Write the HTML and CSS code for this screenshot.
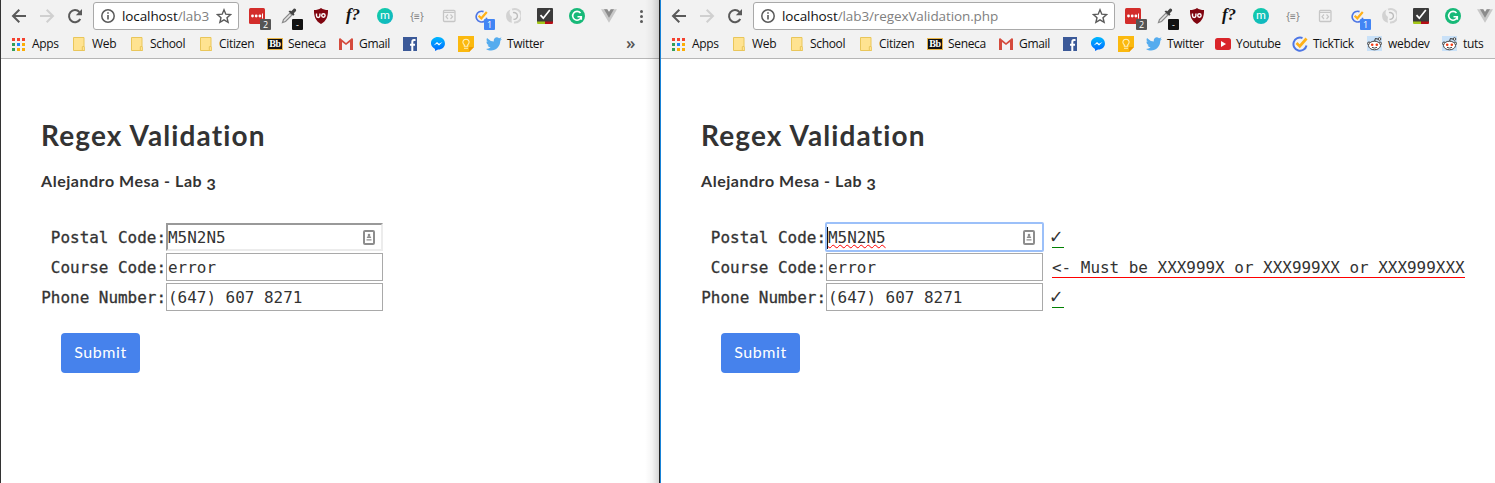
FILE: index.html
```html
<!DOCTYPE html>
<html lang="en">
<head>
<meta charset="utf-8">
<title>Regex Validation</title>
<link rel="stylesheet" href="styles.css">
</head>
<body>
<svg class="defs" aria-hidden="true">
  <linearGradient id="gp" x1="0" y1="0" x2="0" y2="1"><stop offset="0" stop-color="#00b8ff"/><stop offset="1" stop-color="#0068ff"/></linearGradient>
  <symbol id="back" viewBox="0 0 16 16"><path d="M15 8H2.5M8.3 1.7 2 8l6.3 6.3" fill="none" stroke="currentColor" stroke-width="2"/></symbol>
  <symbol id="fwd" viewBox="0 0 16 16"><path d="M1 8h12.5M7.7 1.7 14 8l-6.3 6.3" fill="none" stroke="currentColor" stroke-width="2"/></symbol>
  <symbol id="reload" viewBox="0 0 16 16"><path d="M13.3 11A6 6 0 1 1 12.4 4" fill="none" stroke="currentColor" stroke-width="2"/><path d="M15 1v6.3H8.8z" fill="currentColor"/></symbol>
  <symbol id="info" viewBox="0 0 16 16"><circle cx="8" cy="8" r="6.2" fill="none" stroke="#5a5a5a" stroke-width="1.5"/><path d="M7.2 7h1.6v4.6H7.2zM7.2 4.3h1.6v1.5H7.2z" fill="#5a5a5a"/></symbol>
  <symbol id="star" viewBox="0 0 16 16"><path d="m8 1.8 1.8 4.4 4.8.4-3.6 3.1 1.1 4.6L8 11.8l-4.1 2.5L5 9.700 1.400 6.600l4.800-.4z" fill="none" stroke="#5a5a5a" stroke-width="1.4"/></symbol>
  <symbol id="lastpass" viewBox="0 0 16 16"><rect width="16" height="16" rx="1.500" fill="#d32d2b"/><g fill="#fff"><circle cx="3.500" cy="8" r="1.400"/><circle cx="7.200" cy="8" r="1.400"/><circle cx="10.900" cy="8" r="1.400"/><rect x="13" y="5.500" width="1" height="5"/></g></symbol>
  <symbol id="picker" viewBox="0 0 16 16"><path d="m1.500 14.500 1-3L9 5l2 2-6.500 6.500z" fill="#e4e4e4" stroke="#8a8a8a" stroke-width="1.200"/><path d="m7.500 3.500 1.500-1 1.300.8L12.500 1c1.300-1.300 3.500.7 2.300 2.200l-2 2 .7 1.400-1.200 1.200z" fill="#444"/></symbol>
  <symbol id="ublock" viewBox="0 0 16 16"><path d="M8 0c2 1.400 4.300 2 7 2 .2 6-1.500 11-7 14C2.500 13 .8 8 1 2c2.700 0 5-.6 7-2z" fill="#800610"/><path d="M3.500 5.500v2.300a1.700 1.700 0 0 0 3.400 0V5.500" fill="none" stroke="#fff" stroke-width="1.400"/><circle cx="10.400" cy="7.500" r="1.700" fill="none" stroke="#fff" stroke-width="1.400"/></symbol>
  <symbol id="code" viewBox="0 0 16 16"><rect x="2.500" y="2.500" width="11.500" height="11" rx="1" fill="none" stroke="#c6c6c6" stroke-width="1.300"/><path d="M2.500 4.500h11M7 6.500 5 8.700 7 11m2.500-4.500 2 2.200-2 2.300" fill="none" stroke="#c6c6c6" stroke-width="1.200"/></symbol>
  <symbol id="tick" viewBox="0 0 16 16"><path d="M10.500 2A6.600 6.600 0 1 0 14.500 9.500" fill="none" stroke="#4d76e5" stroke-width="2"/><path d="m4.500 7 3.300 3.200L14.500 2.500" fill="none" stroke="#ffb119" stroke-width="2.700"/></symbol>
  <symbol id="swirl" viewBox="0 0 16 16"><path d="M7 14.700A6.800 6.800 0 0 1 5.500 1.600Q3 6.500 7 9q-.8 3 0 5.700z" fill="#d2d2d2"/><path d="M7 1.700A6.700 6.700 0 1 1 9 14.500" fill="none" stroke="#d4d4d4" stroke-width="2"/><path d="M8 4.700a3.400 3.400 0 1 1 .5 6.600" fill="none" stroke="#bdbdbd" stroke-width="1.400"/></symbol>
  <symbol id="check" viewBox="0 0 16 16"><path d="M0 1q0-1 1-1h14q1 0 1 1v13H0z" fill="#3b3b3b"/><path d="M0 13.500h8V16H1q-1 0-1-1z" fill="#a4c718"/><path d="M8 13.500h8V15q0 1-1 1H8z" fill="#b60f16"/><path d="m3.500 7.200 2.800 3L12.800 2" fill="none" stroke="#fff" stroke-width="1.700"/></symbol>
  <symbol id="gram" viewBox="0 0 16 16"><circle cx="8" cy="8" r="8" fill="#17b978"/><path d="M11.500 5A4.400 4.400 0 1 0 12.300 9M8.500 8.700h3.800v3.100" fill="none" stroke="#fff" stroke-width="1.600"/></symbol>
  <symbol id="vue" viewBox="0 0 16 16"><path d="M0 1.200h6L8 4l2-2.800h6L8 14.800z" fill="#c8c8c8"/><path d="M3 1.200h3.300L8 4l1.700-2.800H13L8 9.700z" fill="#8b8b8b"/></symbol>
  <symbol id="apps" viewBox="0 0 13 13"><path d="M0 0h3v3H0zM5 0h3v3H5zM10 0h3v3h-3z" fill="#f4412f"/><path d="M0 5h3v3H0zM0 10h3v3H0z" fill="#31a05b"/><path d="M5 5h3v3H5z" fill="#1a87ff"/><path d="M10 5h3v3h-3zM5 10h3v3H5zM10 10h3v3h-3z" fill="#fcae06"/></symbol>
  <symbol id="folder" viewBox="0 0 12 14"><path d="M.500.500h10.500v9.500l.7.500v3H.500z" fill="#ffe391" stroke="#e9c65a"/><path d="M9.300 13.500V9.600h1.900" fill="none" stroke="#e9c65a"/></symbol>
  <symbol id="gmail" viewBox="0 0 14 12"><path d="M1 1h12v10H1z" fill="#f3f3f3"/><path d="M3 4v8H0V1l1-1 6 5 6-5 1 1v11h-3V4L7 7z" fill="#d54b3d"/></symbol>
  <symbol id="fb" viewBox="0 0 14 14"><path d="M0 0h14v14H0z" fill="#3b5998"/><path d="M12.500 3H11q-1.700 0-1.700 2v9M7 7.700h5" fill="none" stroke="#fff" stroke-width="2"/></symbol>
  <symbol id="msgr" viewBox="0 0 14 14"><path d="M7 0c9 0 9.500 12.500 0 12.500L4 14v-2C-2.800 8.500-.5 0 7 0z" fill="url(#gp)"/><path d="M2.500 8.500 6 5l2 1.800L11.500 5 8 8.500l-2-1.700z" fill="#fff"/></symbol>
  <symbol id="keep" viewBox="0 0 16 16"><path d="M0 0h16v11l-5 5H0z" fill="#fbb90f"/><path d="M11 16v-5h5z" fill="#f09b00"/><path d="M6.300 10.300V9C3.500 6.500 5 3.300 8 3.300S12.500 6.500 9.700 9v1.300zM6 12.300h4" fill="none" stroke="#fff0c0" stroke-width="1.100"/></symbol>
  <symbol id="bird" viewBox="0 0 16 14"><path d="M1 1q3 3.300 6.800 3.500C7.200 1.500 10.400-1 13 1.200L15.500.5l-1.300 1.900 1.800-.4-1.700 1.800C14.300 11.500 6.500 16 0 12q2.800 0 4.600-1.400-2.400-.3-3-2.300h1.300Q.300 7 .300 4.500l1.500.5Q-.2 3.500 1 1z" fill="#55acee"/></symbol>
  <symbol id="yt" viewBox="0 0 16 12"><rect width="16" height="12" rx="2.500" fill="#d9252a"/><path d="m6 3 5 3-5 3z" fill="#fff"/></symbol>
  <symbol id="reddit" viewBox="0 0 16 16"><path d="M0 0h15v15H0z" fill="#c9e1f8"/><path d="m7.500 6 .8-3.500 3.500.8" fill="none" stroke="#333"/><g fill="#fff" stroke="#444"><circle cx="12.500" cy="3" r="1.300"/><circle cx="2" cy="7.500" r="1.500"/><circle cx="13" cy="7.500" r="1.500"/><ellipse cx="7.500" cy="9.500" rx="6" ry="4.300"/></g><circle cx="5.200" cy="8.700" r="1.300" fill="#f43a14"/><circle cx="9.800" cy="8.700" r="1.300" fill="#f43a14"/><path d="M5 11.300q2.500 1.600 5 0" fill="none" stroke="#444"/></symbol>
  <symbol id="fill" viewBox="0 0 12 15"><rect x="1" y="1" width="10" height="13" rx="1" fill="#fff" stroke="#8d8d8d" stroke-width="2"/><circle cx="6" cy="5" r="1.300" fill="#8d8d8d"/><path d="M3.700 8q0-2 2.300-2t2.300 2zM3.500 9.300h5v1.200h-5z" fill="#8d8d8d"/></symbol>
</svg>
<main class="desktop">
  <section class="window window-left">
    <header class="chrome">
      <div class="toolbar">
        <svg class="nav"><use href="#back"/></svg><svg class="nav off"><use href="#fwd"/></svg><svg class="nav"><use href="#reload"/></svg>
        <div class="omnibox"><svg><use href="#info"/></svg><div class="url"><b>localhost</b>/lab3</div><svg><use href="#star"/></svg></div>
        <div class="extensions">
          <span><svg><use href="#lastpass"/></svg><i class="badge">2</i></span>
          <span><svg><use href="#picker"/></svg><i class="badge black">-</i></span>
          <span><svg><use href="#ublock"/></svg></span>
          <span class="whatfont">f?</span>
          <span><em class="momentum">m</em></span>
          <span class="json">{≡}</span>
          <span><svg><use href="#code"/></svg></span>
          <span><svg class="small"><use href="#tick"/></svg><i class="badge blue">1</i></span>
          <span><svg><use href="#swirl"/></svg></span>
          <span><svg><use href="#check"/></svg></span>
          <span><svg><use href="#gram"/></svg></span>
          <span><svg><use href="#vue"/></svg></span>
          <span class="menu"><u></u><u></u><u></u></span>
        </div>
      </div>
      <nav class="bookmarks">
        <a><svg class="s13"><use href="#apps"/></svg>Apps</a>
        <a><svg class="sf"><use href="#folder"/></svg>Web</a>
        <a><svg class="sf"><use href="#folder"/></svg>School</a>
        <a><svg class="sf"><use href="#folder"/></svg>Citizen</a>
        <a><em class="bb">Bb</em>Seneca</a>
        <a><svg class="sg"><use href="#gmail"/></svg>Gmail</a>
        <a><svg class="s14"><use href="#fb"/></svg></a>
        <a><svg class="s14"><use href="#msgr"/></svg></a>
        <a><svg><use href="#keep"/></svg></a>
        <a><svg class="st"><use href="#bird"/></svg>Twitter</a>
        <a class="more">»</a>
      </nav>
    </header>
    <div class="page">
      <h1>Regex Validation</h1>
      <h2>Alejandro Mesa - Lab <span class="oldstyle">3</span></h2>
      <form class="form">
        <label>Postal Code:</label><div class="field inset"><span>M5N2N5</span><svg class="fill"><use href="#fill"/></svg></div><p></p>
        <label>Course Code:</label><div class="field">error</div><p></p>
        <label>Phone Number:</label><div class="field">(647) 607 8271</div><p></p>
      </form>
      <button class="submit" type="button">Submit</button>
    </div>
  </section>
  <section class="window window-right">
    <header class="chrome">
      <div class="toolbar">
        <svg class="nav"><use href="#back"/></svg><svg class="nav off"><use href="#fwd"/></svg><svg class="nav"><use href="#reload"/></svg>
        <div class="omnibox"><svg><use href="#info"/></svg><div class="url"><b>localhost</b>/lab3/regexValidation.php</div><svg><use href="#star"/></svg></div>
        <div class="extensions">
          <span><svg><use href="#lastpass"/></svg><i class="badge">2</i></span>
          <span><svg><use href="#picker"/></svg><i class="badge black">-</i></span>
          <span><svg><use href="#ublock"/></svg></span>
          <span class="whatfont">f?</span>
          <span><em class="momentum">m</em></span>
          <span class="json">{≡}</span>
          <span><svg><use href="#code"/></svg></span>
          <span><svg class="small"><use href="#tick"/></svg><i class="badge blue">1</i></span>
          <span><svg><use href="#swirl"/></svg></span>
          <span><svg><use href="#check"/></svg></span>
          <span><svg><use href="#gram"/></svg></span>
          <span><svg><use href="#vue"/></svg></span>
        </div>
      </div>
      <nav class="bookmarks">
        <a><svg class="s13"><use href="#apps"/></svg>Apps</a>
        <a><svg class="sf"><use href="#folder"/></svg>Web</a>
        <a><svg class="sf"><use href="#folder"/></svg>School</a>
        <a><svg class="sf"><use href="#folder"/></svg>Citizen</a>
        <a><em class="bb">Bb</em>Seneca</a>
        <a><svg class="sg"><use href="#gmail"/></svg>Gmail</a>
        <a><svg class="s14"><use href="#fb"/></svg></a>
        <a><svg class="s14"><use href="#msgr"/></svg></a>
        <a><svg><use href="#keep"/></svg></a>
        <a><svg class="st"><use href="#bird"/></svg>Twitter</a>
        <a><svg class="sy"><use href="#yt"/></svg>Youtube</a>
        <a><svg><use href="#tick"/></svg>TickTick</a>
        <a><svg><use href="#reddit"/></svg>webdev</a>
        <a><svg><use href="#reddit"/></svg>tuts</a>
      </nav>
    </header>
    <div class="page">
      <h1>Regex Validation</h1>
      <h2>Alejandro Mesa - Lab <span class="oldstyle">3</span></h2>
      <form class="form">
        <label>Postal Code:</label><div class="field inset focus"><span class="misspelt">M5N2N5</span><svg class="fill"><use href="#fill"/></svg></div><p><span class="ok">✓</span></p>
        <label>Course Code:</label><div class="field">error</div><p><span class="bad">&lt;- Must be XXX999X or XXX999XX or XXX999XXX</span></p>
        <label>Phone Number:</label><div class="field">(647) 607 8271</div><p><span class="ok">✓</span></p>
      </form>
      <button class="submit" type="button">Submit</button>
    </div>
  </section>
</main>
</body>
</html>
```
FILE: styles.css
```css
* { box-sizing: border-box; }
body { margin: 0; background: #fff; color: #333; overflow: hidden; }
.defs { position: absolute; width: 0; height: 0; }
.desktop { display: grid; grid-template-columns: 660px 835px; height: 483px; }
.window { position: relative; overflow: hidden; min-width: 0; border-left: 1px solid #333; }
.window-left { border-right: 1px solid #222; }
.window-left::after { content: ""; position: absolute; top: 0; right: 0; bottom: 0; width: 14px; background: linear-gradient(to right, transparent, rgba(0, 0, 0, .04) 50%, rgba(0, 0, 0, .16)); }
.window-right { border-left-color: #1883d7; }
.chrome { height: 59px; background: #f2f2f2; border-bottom: 1px solid #b6b6b6; font-family: "Open Sans", "Noto Sans", sans-serif; }
.chrome svg { width: 16px; height: 16px; flex: none; display: block; }

.toolbar { display: flex; align-items: center; height: 32px; padding-left: 10px; color: #5a5a5a; }
.toolbar .nav { margin-right: 12px; }
.toolbar .off { color: #d0d0d0; }
.omnibox { display: flex; align-items: center; flex: none; width: 146px; height: 28px; margin-left: -2px; padding: 0 6px; border: 1px solid #a9a9a9; border-radius: 3px; background: #fff; }
.window-right .omnibox { width: 362px; }
.url { flex: 1; margin: 0 6px; font-size: 13.5px; letter-spacing: -.1px; line-height: 20px; white-space: nowrap; color: #808080; }
.window-left .url { flex: none; width: 88px; }
.url b { font-weight: 400; color: #111; }
.extensions { display: flex; margin-left: 2px; }
.extensions > span { position: relative; display: flex; align-items: center; justify-content: center; flex: none; width: 32px; height: 32px; }
.extensions .small { width: 13px; height: 13px; }
.badge { position: absolute; left: 19px; top: 19px; width: 11px; height: 11px; border-radius: 1px; background: #555; color: #fff; font: 9px/11px "Open Sans", sans-serif; text-align: center; }
.black { background: #111; }
.blue { background: #4285f4; }
.extensions .whatfont { font: italic bold 17px/20px "Liberation Serif", serif; color: #111; padding-bottom: 2px; }
.momentum { width: 16px; height: 16px; border-radius: 50%; background: linear-gradient(135deg, #12cfa2, #10b3c9); color: #fff; font: 12px/14px Lato, sans-serif; text-align: center; }
.json { font-size: 10px; color: #777; }
.extensions .menu { flex-direction: column; gap: 2px; }
.menu u { width: 3px; height: 3px; border-radius: 50%; background: #5a5a5a; }

.bookmarks { display: grid; grid-template-columns: 61px 58px 69px 67px 72px 64px 28px 27px 28px 69px 77px 75px 75px 53px; padding-left: 11px; height: 24px; align-items: center; font-size: 12px; letter-spacing: -.33px; line-height: 16px; color: #111; }
.window-left .bookmarks { grid-template-columns: 61px 58px 69px 67px 72px 64px 28px 27px 28px 140px 20px; }
.bookmarks a { display: flex; align-items: center; gap: 5px; height: 16px; white-space: nowrap; }
.chrome .s13 { width: 13px; height: 13px; margin-right: 2px; }
.chrome .sf { width: 12px; height: 14px; margin-right: 2px; }
.chrome .sg { width: 14px; height: 12px; margin-right: 1px; }
.chrome .s14 { width: 14px; height: 14px; }
.chrome .st { height: 14px; }
.chrome .sy { height: 12px; }
.bb { width: 16px; height: 12px; border: 1px solid #e9b64a; background: #111; color: #fff; font: bold 10px/10px "Liberation Serif", serif; text-align: center; }
.bookmarks .more { font-size: 17px; font-weight: 600; color: #555; padding-bottom: 2px; }

.page { padding: 59px 0 0 40px; }
h1 { margin: 0; height: 34px; font: 700 28px/34px Lato, sans-serif; letter-spacing: 1.13px; font-variant-ligatures: none; white-space: nowrap; }
h2 { margin: 19px 0 0; height: 20px; font: 700 16px/20px Lato, sans-serif; letter-spacing: .53px; white-space: nowrap; }
.oldstyle { position: relative; top: 3px; }
.form { display: grid; grid-template-columns: 125px 217px 1fr; row-gap: 2px; margin-top: 32px; font: 15.94px/26px "DejaVu Sans Mono", monospace; white-space: nowrap; }
.form label { height: 28px; padding-top: 2px; text-align: right; -webkit-text-stroke: .3px #333; }
.field { display: flex; align-items: center; height: 28px; border: 1px solid #a9a9a9; padding: 2px 1px 0; }
.inset { justify-content: space-between; padding: 2px 6px 0 0; border: 2px solid #ececec; border-top-color: #999; border-left-color: #999; }
.focus { border: 1px solid #999; padding: 2px 7px 0 1px; outline: 2px solid #9cc0f9; outline-offset: -1px; border-radius: 1px; }
.misspelt { margin-left: -1px; border-left: 1px solid #111; line-height: 22px; text-decoration: underline wavy red 1px; text-underline-offset: 1px; }
.fill { width: 12px; height: 15px; flex: none; margin-top: -2px; }
.form p { margin: 0; padding-left: 9px; height: 28px; display: flex; align-items: flex-start; }
.form p span { height: 25px; line-height: 30px; border-bottom: 1px solid green; }
.form p .ok { width: 12px; font-size: 20px; text-indent: -2px; line-height: 27px; }
.form p .bad { border-color: red; }
.submit { display: block; width: 79px; height: 40px; margin: 22px 0 0 20px; padding: 0 0 2px; border: 0; border-radius: 4px; background: #4682ec; color: #fff; font: 16px/20px Lato, sans-serif; letter-spacing: .6px; }
```
